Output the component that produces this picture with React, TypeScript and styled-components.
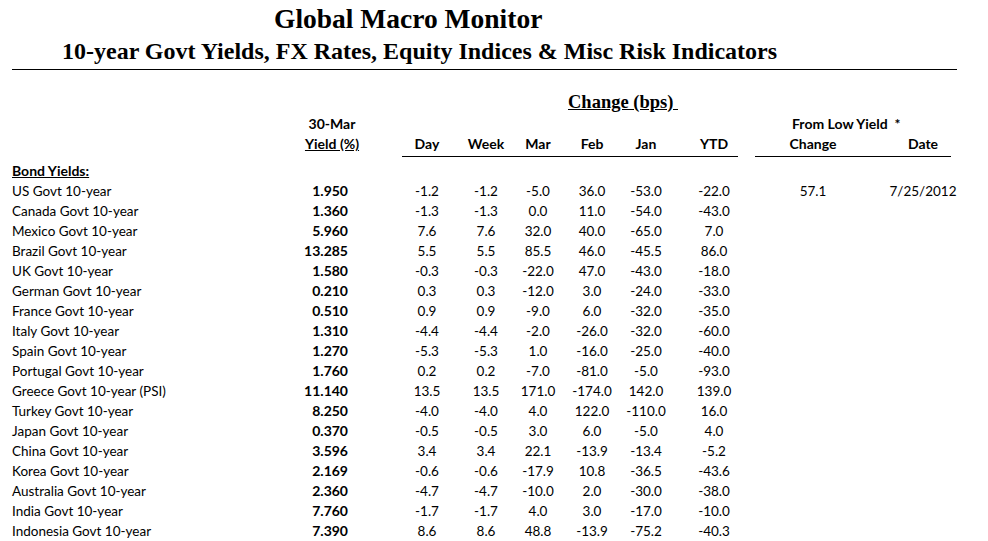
import React from 'react';
import styled, { createGlobalStyle } from 'styled-components';

const GlobalStyle = createGlobalStyle`
    body {
        margin: 0;
        background: #fff;
        color: #000;
        font-family: Lato, "Noto Sans", sans-serif;
    }
`;

// label | yield | spacer | Day | Week | Mar | Feb | Jan | YTD | low change | low date
const COLUMNS = '280px 80px 26px 58px 60px 44px 64px 44px 92px 106px 114px';

const Page = styled.div`
    width: 988px;
    padding-top: 4px;
`;

const Title = styled.h1`
    margin: 0 0 0 274px;
    font: bold 27.5px/30px "Liberation Serif", "Times New Roman", serif;
`;

const Subtitle = styled.h2`
    margin: 3px 0 0 62px;
    font: bold 24px/28px "Liberation Serif", "Times New Roman", serif;
`;

const Rule = styled.div`
    margin: 4px 31px 0 12px;
    border-top: 1px solid #000;
`;

const Table = styled.div`
    margin: 22px 0 0 12px;
    font-size: 13.5px;
    line-height: 20px;
    white-space: nowrap;
`;

const Head = styled.div`
    display: grid;
    grid-template-columns: ${COLUMNS};
    grid-template-rows: 22px 20px 20px 7px;
    font-size: 14px;
`;

const Row = styled.div`
    display: grid;
    grid-template-columns: ${COLUMNS};
    height: 20px;
`;

const GroupTitle = styled.div`
    grid-column: 4 / 10;
    grid-row: 1;
    padding-left: 170px;
    font: bold 18.5px/20px "Liberation Serif", "Times New Roman", serif;
    text-decoration: underline;
    white-space: pre;
`;

const HeadCell = styled.div<{ $col: number; $row: number; $underline?: boolean }>`
    grid-column: ${(p) => p.$col};
    grid-row: ${(p) => p.$row};
    text-align: center;
    font-weight: bold;
    text-decoration: ${(p) => (p.$underline ? 'underline' : 'none')};
`;

const LowYieldHead = styled.div`
    grid-column: 10 / 12;
    grid-row: 2;
    padding-left: 32px;
    font-weight: bold;
    white-space: pre;
`;

const HeadLine = styled.div<{ $span: string; $left: number; $right: number }>`
    grid-column: ${(p) => p.$span};
    grid-row: 4;
    margin: 2px ${(p) => p.$right}px 0 ${(p) => p.$left}px;
    border-top: 1px solid #000;
`;

const Section = styled.div`
    font-size: 14px;
    font-weight: bold;
    text-decoration: underline;
`;

const Label = styled.div`
    grid-column: 1;
`;

const YieldValue = styled.div`
    grid-column: 2;
    padding-right: 24px;
    text-align: right;
    font-size: 14px;
    font-weight: bold;
`;

const Value = styled.div<{ $col: number }>`
    grid-column: ${(p) => p.$col};
    text-align: center;
`;

const rows: [string, string, string[]][] = [
    ['US Govt 10-year', '1.950', ['-1.2', '-1.2', '-5.0', '36.0', '-53.0', '-22.0', '57.1', '7/25/2012']],
    ['Canada Govt 10-year', '1.360', ['-1.3', '-1.3', '0.0', '11.0', '-54.0', '-43.0']],
    ['Mexico Govt 10-year', '5.960', ['7.6', '7.6', '32.0', '40.0', '-65.0', '7.0']],
    ['Brazil Govt 10-year', '13.285', ['5.5', '5.5', '85.5', '46.0', '-45.5', '86.0']],
    ['UK Govt 10-year', '1.580', ['-0.3', '-0.3', '-22.0', '47.0', '-43.0', '-18.0']],
    ['German Govt 10-year', '0.210', ['0.3', '0.3', '-12.0', '3.0', '-24.0', '-33.0']],
    ['France Govt 10-year', '0.510', ['0.9', '0.9', '-9.0', '6.0', '-32.0', '-35.0']],
    ['Italy Govt 10-year', '1.310', ['-4.4', '-4.4', '-2.0', '-26.0', '-32.0', '-60.0']],
    ['Spain Govt 10-year', '1.270', ['-5.3', '-5.3', '1.0', '-16.0', '-25.0', '-40.0']],
    ['Portugal Govt 10-year', '1.760', ['0.2', '0.2', '-7.0', '-81.0', '-5.0', '-93.0']],
    ['Greece Govt 10-year (PSI)', '11.140', ['13.5', '13.5', '171.0', '-174.0', '142.0', '139.0']],
    ['Turkey Govt 10-year', '8.250', ['-4.0', '-4.0', '4.0', '122.0', '-110.0', '16.0']],
    ['Japan Govt 10-year', '0.370', ['-0.5', '-0.5', '3.0', '6.0', '-5.0', '4.0']],
    ['China Govt 10-year', '3.596', ['3.4', '3.4', '22.1', '-13.9', '-13.4', '-5.2']],
    ['Korea Govt 10-year', '2.169', ['-0.6', '-0.6', '-17.9', '10.8', '-36.5', '-43.6']],
    ['Australia Govt 10-year', '2.360', ['-4.7', '-4.7', '-10.0', '2.0', '-30.0', '-38.0']],
    ['India Govt 10-year', '7.760', ['-1.7', '-1.7', '4.0', '3.0', '-17.0', '-10.0']],
    ['Indonesia Govt 10-year', '7.390', ['8.6', '8.6', '48.8', '-13.9', '-75.2', '-40.3']],
];

const changeHeads = ['Day', 'Week', 'Mar', 'Feb', 'Jan', 'YTD'];

const App = () => {
    return (
        <Page>
            <GlobalStyle />
            <Title>Global Macro Monitor</Title>
            <Subtitle>10-year Govt Yields, FX Rates, Equity Indices &amp; Misc Risk Indicators</Subtitle>
            <Rule />
            <Table>
                <Head>
                    <GroupTitle>{'Change (bps) '}</GroupTitle>
                    <HeadCell $col={2} $row={2}>30-Mar</HeadCell>
                    <LowYieldHead>{'From Low Yield  *'}</LowYieldHead>
                    <HeadCell $col={2} $row={3} $underline>
                        Yield (%)
                    </HeadCell>
                    {changeHeads.map((text, index) => (
                        <HeadCell key={`head-${text}`} $col={4 + index} $row={3}>
                            {text}
                        </HeadCell>
                    ))}
                    <HeadCell $col={10} $row={3}>Change</HeadCell>
                    <HeadCell $col={11} $row={3}>Date</HeadCell>
                    <HeadLine $span="4 / 10" $left={4} $right={22} />
                    <HeadLine $span="10 / 12" $left={-5} $right={29} />
                </Head>

                <Row>
                    <Section>Bond Yields:</Section>
                </Row>
                {rows.map(([label, yieldValue, values]) => (
                    <Row key={label}>
                        <Label>{label}</Label>
                        <YieldValue>{yieldValue}</YieldValue>
                        {values.map((value, index) => (
                            <Value key={`${label}-${index}`} $col={4 + index}>
                                {value}
                            </Value>
                        ))}
                    </Row>
                ))}
            </Table>
        </Page>
    );
};

export default App;
